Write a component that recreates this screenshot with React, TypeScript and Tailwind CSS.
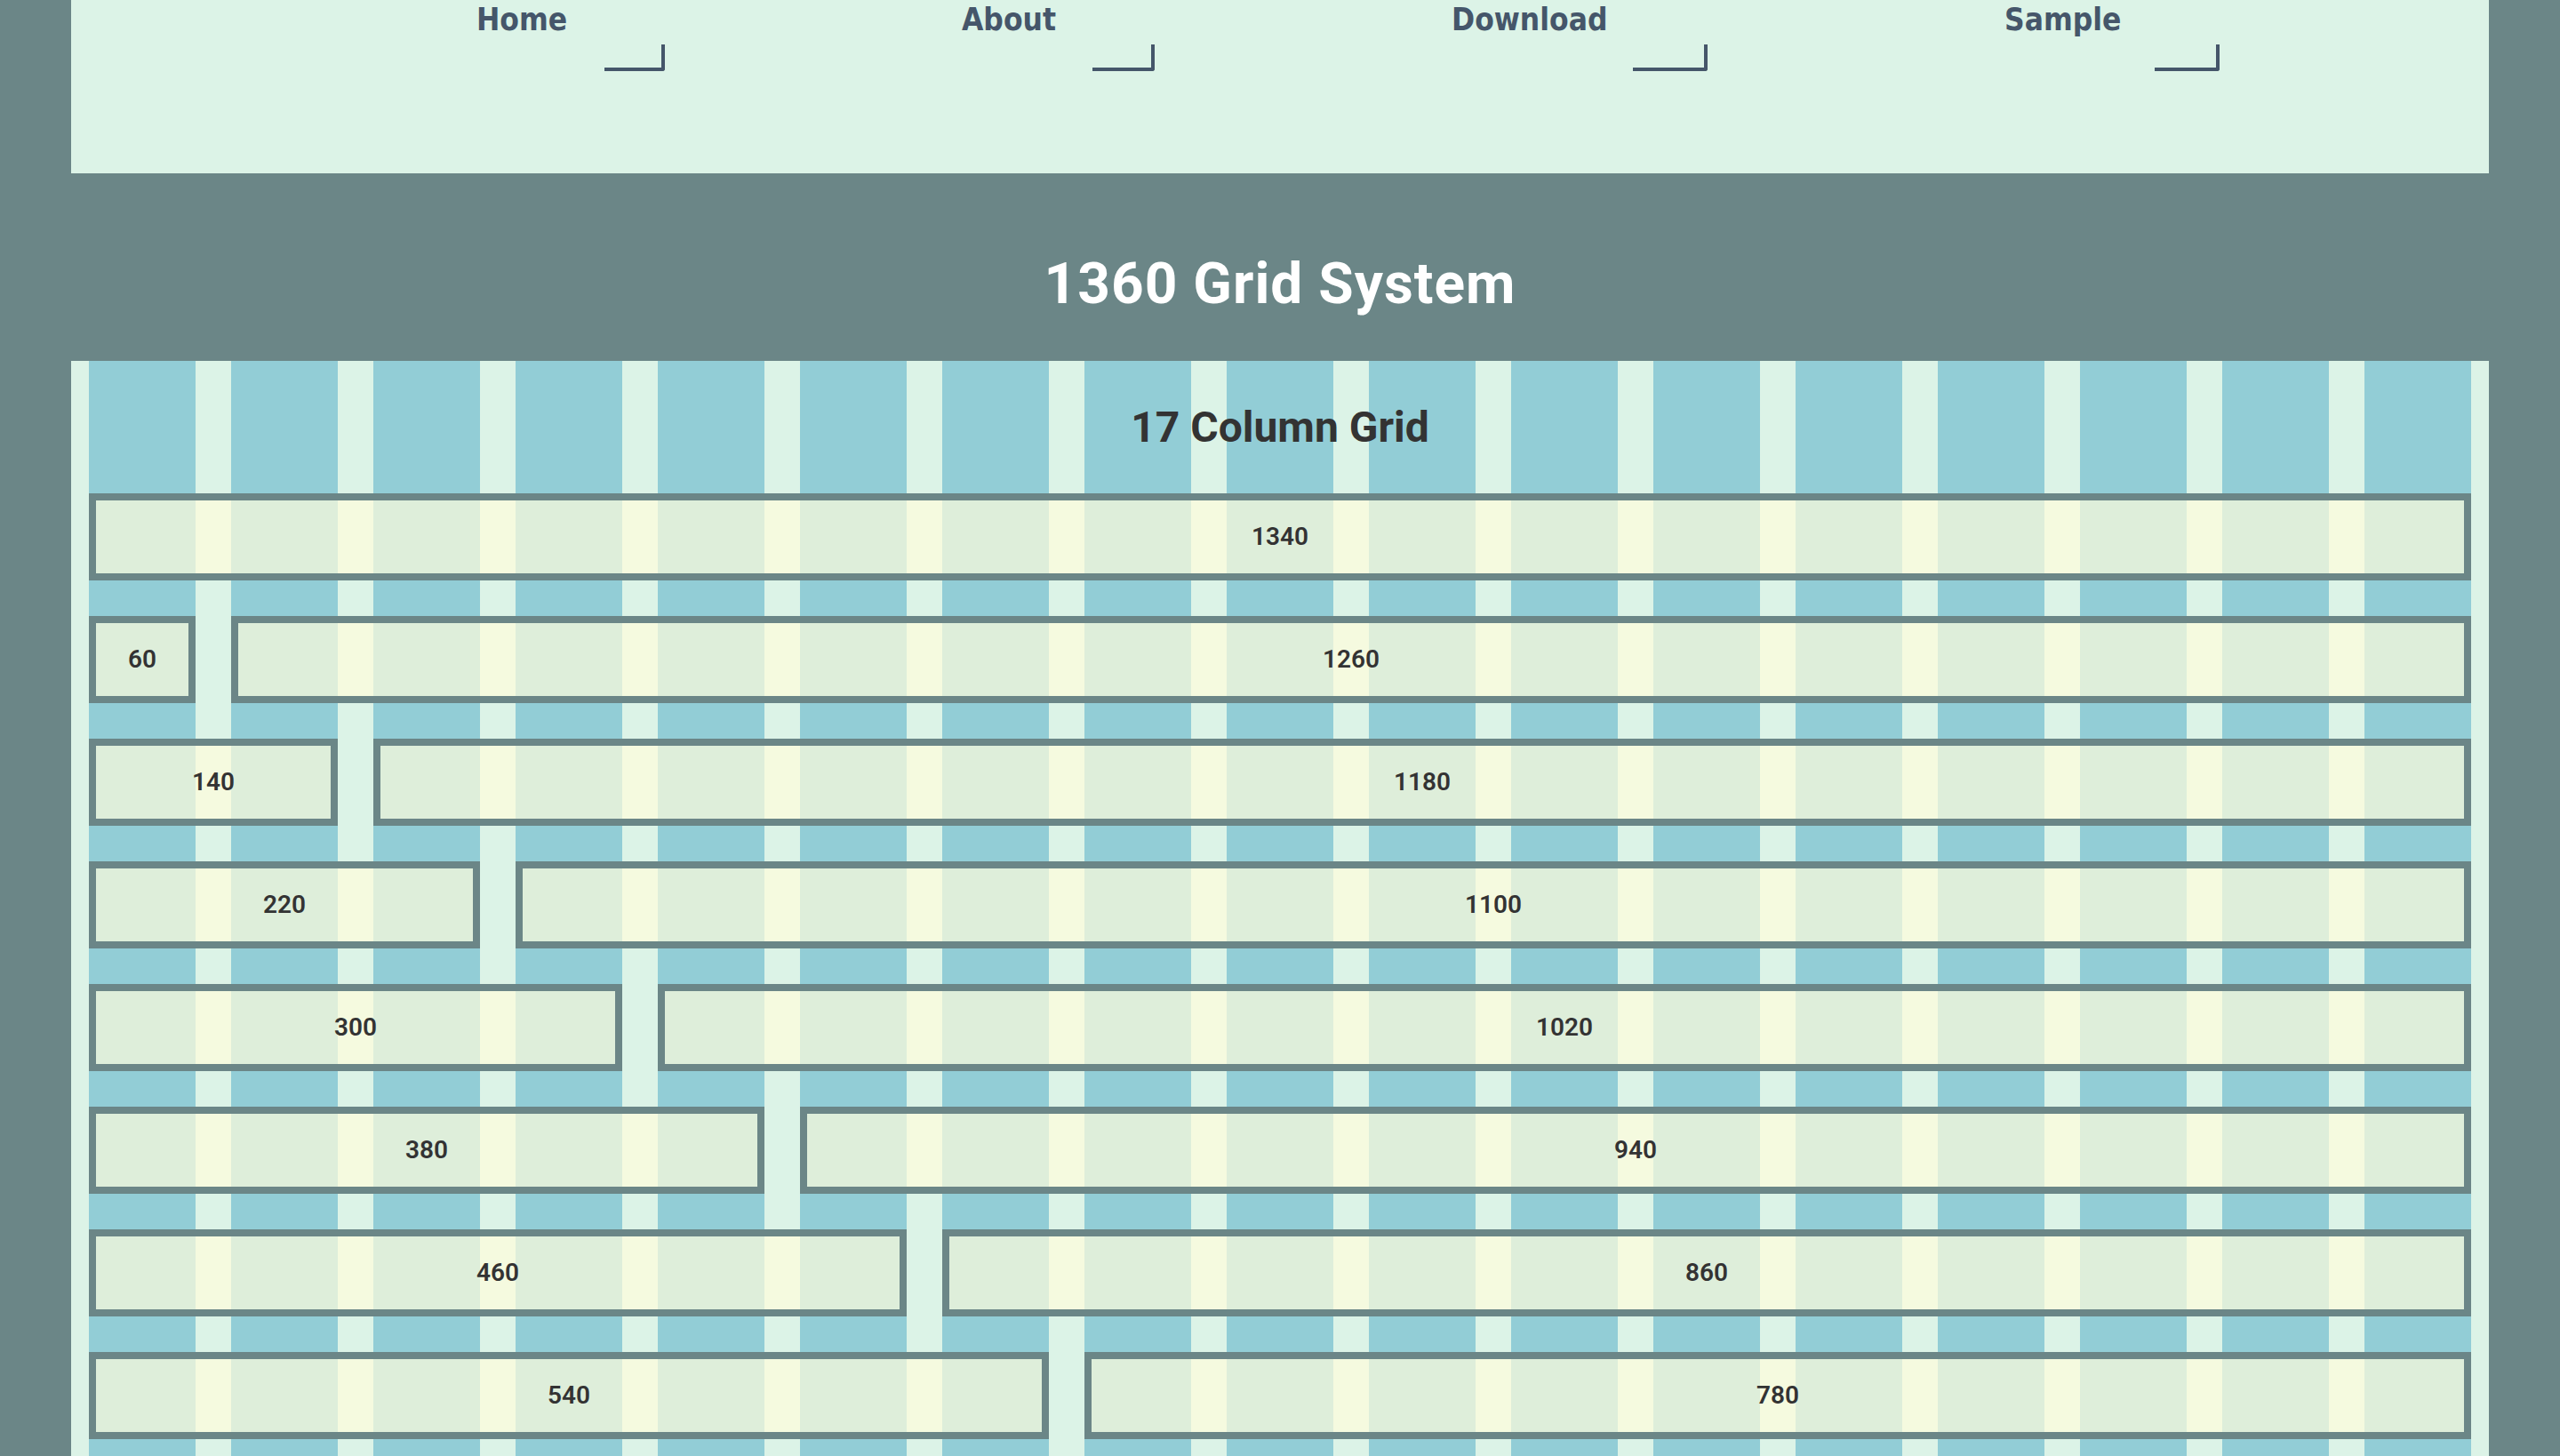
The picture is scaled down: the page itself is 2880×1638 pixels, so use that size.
const navItems = [
  { label: 'Home', width: 'w-[212px]', bracket: 'w-[68px]' },
  { label: 'About', width: 'w-[217px]', bracket: 'w-[70px]' },
  { label: 'Download', width: 'w-[288px]', bracket: 'w-[84px]' },
  { label: 'Sample', width: 'w-[242px]', bracket: 'w-[73px]' },
];

// class names written out so tailwind picks them up
const spans: Record<number, string> = {
  1: 'col-span-1',
  2: 'col-span-2',
  3: 'col-span-3',
  4: 'col-span-4',
  5: 'col-span-5',
  6: 'col-span-6',
  7: 'col-span-7',
  8: 'col-span-8',
  9: 'col-span-9',
  10: 'col-span-10',
  11: 'col-span-11',
  12: 'col-span-12',
  13: 'col-span-13',
  14: 'col-span-14',
  15: 'col-span-15',
  16: 'col-span-16',
  17: 'col-span-17',
};

const rows = [[17], [1, 16], [2, 15], [3, 14], [4, 13], [5, 12], [6, 11], [7, 10]];

export default function App() {
  return (
    <div className="min-h-screen bg-[#6b8687] px-[80px]">
      {/* nav */}
      <nav className="h-[195px] bg-[#dcf3e7] pl-[456px] pt-[2px]">
        <ul className="flex gap-[334px]">
          {navItems.map((item) => (
            <li key={item.label} className={`${item.width} flex flex-col`}>
              <a
                href="#"
                className="text-[35px] leading-[40px] font-bold font-stretch-condensed text-[#45566a] [font-family:'DejaVu_Sans_Condensed','DejaVu_Sans',sans-serif]"
              >
                {item.label}
              </a>
              <span
                className={`${item.bracket} self-end mt-[8px] h-[30px] border-b-4 border-r-4 border-[#45566a] rounded-br-[3px]`}
              />
            </li>
          ))}
        </ul>
      </nav>

      {/* title */}
      <div className="h-[211px] pt-[93px]">
        <h1 className="text-center text-[64px] leading-none font-bold tracking-[1px] text-white [font-family:Roboto,sans-serif]">
          1360 Grid System
        </h1>
      </div>

      {/* grid demo */}
      <section className="bg-[repeating-linear-gradient(90deg,#dcf3e7_0px,#dcf3e7_20px,#92cdd6_20px,#92cdd6_140px,#dcf3e7_140px,#dcf3e7_160px)] pt-[51px] pb-[40px] [font-family:Roboto,sans-serif]">
        <h2 className="text-center text-[48px] leading-none font-bold text-[#333333] mb-[50px]">17 Column Grid</h2>
        <div className="grid grid-cols-17 gap-[40px] px-[20px]">
          {rows.map((row, i) =>
            row.map((n, j) => (
              <div
                key={`${i}-${j}`}
                className={`${spans[n]} h-[98px] border-8 border-[#6b8687] bg-[rgba(255,252,220,0.7)] flex items-center justify-center text-[28px] font-semibold text-[#333333]`}
              >
                {n * 80 - 20}
              </div>
            ))
          )}
        </div>
      </section>
    </div>
  );
}
